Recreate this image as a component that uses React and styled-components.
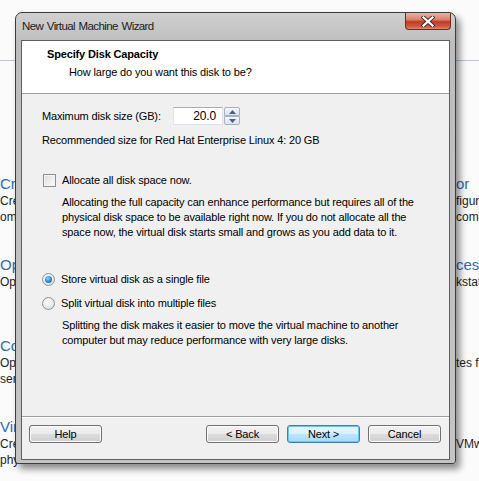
import React from "react";
import styled, { createGlobalStyle } from "styled-components";

const GlobalStyle = createGlobalStyle`
  html, body {
    margin: 0;
    padding: 0;
    background: #fbfbfb;
  }
  body {
    font-family: "Liberation Sans", Arial, sans-serif;
  }
`;

const Desktop = styled.div`
  position: relative;
  width: 479px;
  height: 481px;
  overflow: hidden;
  background: #fbfbfb;
`;

const Backdrop = styled.div`
  display: flex;
  justify-content: space-between;
  height: 100%;
  border-top: 1px solid transparent;
  box-sizing: border-box;
`;

const Rule = styled.div`
  position: absolute;
  left: 0;
  right: 0;
  top: 60px;
  height: 1px;
  background: #b6c6d6;
`;

const Column = styled.div`
  width: ${(p) => p.$width}px;
  padding-top: 174px;
  overflow: hidden;
  white-space: nowrap;
`;

const Section = styled.div`
  height: 81px;
`;

const SectionHead = styled.div`
  font-size: 15px;
  line-height: 18px;
  color: #2d6bb5;
`;

const SectionLine = styled.div`
  font-size: 12px;
  line-height: 16px;
  color: #1e1e1e;
`;

const Window = styled.div`
  position: absolute;
  left: 15px;
  top: 12px;
  width: 441px;
  height: 452px;
  box-sizing: border-box;
  border: 1px solid #3c3c3c;
  border-radius: 7px 7px 3px 3px;
  background: linear-gradient(#d0d0d0, #bdbdbd 30px, #c4c4c4);
  box-shadow: 4px 5px 7px rgba(0, 0, 0, 0.45);
  display: flex;
  flex-direction: column;
  padding: 0 5px 3px 5px;
`;

const TitleBar = styled.div`
  height: 27px;
  display: flex;
  justify-content: space-between;
  align-items: flex-start;
  margin-right: -1px;
`;

const Caption = styled.div`
  font-size: 11.5px;
  letter-spacing: -0.6px;
  word-spacing: 1px;
  color: #1c1c1c;
  padding: 7px 0 0 1px;
`;

const CloseButton = styled.div`
  width: 46px;
  height: 17px;
  box-sizing: border-box;
  border: 1px solid #6d2a20;
  border-top: none;
  border-radius: 0 0 4px 4px;
  background: linear-gradient(#e9b2a4, #d98471 40%, #c13a26 55%, #cf5a44 85%, #e08a73);
  display: flex;
  align-items: center;
  justify-content: center;
`;

const Client = styled.div`
  flex: 1;
  border: 1px solid #5f5f5f;
  background: #f0f0f0;
  display: flex;
  flex-direction: column;
  font-size: 11px;
  letter-spacing: -0.15px;
  color: #000;
`;

const Header = styled.div`
  background: #fff;
  border-bottom: 1px solid #a0a0a0;
  padding: 6px 0 0 25px;
  height: 46px;
`;

const HeaderTitle = styled.div`
  font-weight: bold;
  line-height: 15px;
`;

const HeaderSub = styled.div`
  line-height: 15px;
  margin: 3px 0 0 22px;
`;

const Body = styled.div`
  flex: 1;
  padding: 13px 0 0 20px;
  display: flex;
  flex-direction: column;
`;

const Row = styled.div`
  display: flex;
  align-items: center;
  margin-top: ${(p) => p.$top || 0}px;
  line-height: 15px;
`;

const Label = styled.span`
  width: 131px;
`;

const SpinField = styled.div`
  width: 50px;
  height: 18px;
  box-sizing: border-box;
  background: #fff;
  border: 1px solid #e2e3ea;
  border-top-color: #abadb3;
  text-align: right;
  padding-right: 6px;
  line-height: 16px;
  font-size: 12px;
`;

const SpinButtons = styled.div`
  display: flex;
  flex-direction: column;
  margin-left: 1px;
  height: 18px;
`;

const SpinHalf = styled.div`
  width: 16px;
  height: 9px;
  box-sizing: border-box;
  border: 1px solid #a6b2c4;
  border-radius: ${(p) => (p.$up ? "2px 2px 0 0" : "0 0 2px 2px")};
  background: linear-gradient(#f4f7fb, #dce4ee);
  display: flex;
  align-items: center;
  justify-content: center;
`;

const Text = styled.div`
  line-height: 15px;
  margin-top: ${(p) => p.$top || 0}px;
  margin-left: ${(p) => p.$indent || 0}px;
`;

const CheckBox = styled.span`
  flex: none;
  width: 13px;
  height: 13px;
  box-sizing: border-box;
  border: 1px solid #8e8f8f;
  background: linear-gradient(135deg, #dcdcdc, #fdfdfd);
  box-shadow: inset 0 0 0 1px #f4f4f4;
  margin: 0 6px 0 1px;
`;

const Radio = styled.span`
  flex: none;
  width: 13px;
  height: 13px;
  box-sizing: border-box;
  border-radius: 50%;
  border: 1px solid #939393;
  background: radial-gradient(circle at 40% 35%, #fdfdfd, #d8d8d8);
  margin-right: 6px;
  display: flex;
  align-items: center;
  justify-content: center;
`;

const RadioDot = styled.span`
  width: 7px;
  height: 7px;
  border-radius: 50%;
  background: radial-gradient(circle at 40% 35%, #8fd2fb, #2a85d0 55%, #16528f);
`;

const Footer = styled.div`
  border-top: 1px solid #a0a0a0;
  box-shadow: inset 0 1px 0 #ffffff;
  height: 34px;
  display: flex;
  align-items: flex-start;
  padding: 8px 8px 0 7px;
`;

const Button = styled.div`
  width: 73px;
  height: 18px;
  box-sizing: border-box;
  border: 1px solid ${(p) => (p.$default ? "#3c7fb1" : "#707070")};
  border-radius: 3px;
  background: ${(p) =>
    p.$default
      ? "linear-gradient(#eaf6fd, #d9f0fc 50%, #bee6fd 50%, #a7d9f5)"
      : "linear-gradient(#f2f2f2, #ebebeb 50%, #dddddd 50%, #cfcfcf)"};
  box-shadow: ${(p) => (p.$default ? "inset 0 0 0 1px #6cc6f2" : "inset 0 0 0 1px #fcfcfc")};
  text-align: center;
  line-height: 16px;
  margin-left: ${(p) => p.$gap || 0}px;
`;

const Spacer = styled.div`
  flex: 1;
`;

const Arrow = ({ down }) => (
  <svg width="7" height="4" viewBox="0 0 7 4">
    <path d={down ? "M0 0h7L3.5 4z" : "M0 4h7L3.5 0z"} fill="#4b5f82" />
  </svg>
);

const CloseGlyph = () => (
  <svg width="14" height="11" viewBox="0 0 14 11">
    <path d="M2.5 1.5l9 8M11.5 1.5l-9 8" stroke="#4a2a26" strokeWidth="4" strokeLinecap="square" />
    <path d="M2.5 1.5l9 8M11.5 1.5l-9 8" stroke="#ffffff" strokeWidth="2.2" strokeLinecap="square" />
  </svg>
);

const leftSections = [
  ["Create a New Virtual Machine", "Create a new virtual machine", "om this computer"],
  ["Open a Virtual Machine", "Open an existing virtual machine"],
  ["Connect to a Remote Server", "Open virtual machines on a remote", "server"],
  ["Virtualize a Physical Machine", "Create a virtual machine from a", "physical PC"],
];

const rightSections = [
  ["or", "figure", "computer"],
  ["ces", "kstation"],
  ["", "tes for"],
  ["", "VMware"],
];

export default function App() {
  return (
    <>
      <GlobalStyle />
      <Desktop>
        <Rule />
        <Backdrop>
          <Column $width={40}>
            {leftSections.map(([head, ...lines], i) => (
              <Section key={i}>
                <SectionHead>{head}</SectionHead>
                {lines.map((l, j) => (
                  <SectionLine key={j}>{l}</SectionLine>
                ))}
              </Section>
            ))}
          </Column>
          <Column $width={23}>
            {rightSections.map(([head, ...lines], i) => (
              <Section key={i}>
                <SectionHead>{head || "\u00a0"}</SectionHead>
                {lines.map((l, j) => (
                  <SectionLine key={j}>{l}</SectionLine>
                ))}
              </Section>
            ))}
          </Column>
        </Backdrop>

        <Window>
          <TitleBar>
            <Caption>New Virtual Machine Wizard</Caption>
            <CloseButton>
              <CloseGlyph />
            </CloseButton>
          </TitleBar>
          <Client>
            <Header>
              <HeaderTitle>Specify Disk Capacity</HeaderTitle>
              <HeaderSub>How large do you want this disk to be?</HeaderSub>
            </Header>
            <Body>
              <Row>
                <Label>Maximum disk size (GB):</Label>
                <SpinField>20.0</SpinField>
                <SpinButtons>
                  <SpinHalf $up>
                    <Arrow />
                  </SpinHalf>
                  <SpinHalf>
                    <Arrow down />
                  </SpinHalf>
                </SpinButtons>
              </Row>
              <Text $top={8}>Recommended size for Red Hat Enterprise Linux 4: 20 GB</Text>
              <Row $top={25}>
                <CheckBox />
                <span>Allocate all disk space now.</span>
              </Row>
              <Text $top={7} $indent={20}>
                Allocating the full capacity can enhance performance but requires all of the
                <br />
                physical disk space to be available right now. If you do not allocate all the
                <br />
                space now, the virtual disk starts small and grows as you add data to it.
              </Text>
              <Row $top={32}>
                <Radio>
                  <RadioDot />
                </Radio>
                <span>Store virtual disk as a single file</span>
              </Row>
              <Row $top={9}>
                <Radio />
                <span>Split virtual disk into multiple files</span>
              </Row>
              <Text $top={7} $indent={20}>
                Splitting the disk makes it easier to move the virtual machine to another
                <br />
                computer but may reduce performance with very large disks.
              </Text>
            </Body>
            <Footer>
              <Button>Help</Button>
              <Spacer />
              <Button>&lt; Back</Button>
              <Button $default $gap={8}>
                Next &gt;
              </Button>
              <Button $gap={8}>Cancel</Button>
            </Footer>
          </Client>
        </Window>
      </Desktop>
    </>
  );
}
